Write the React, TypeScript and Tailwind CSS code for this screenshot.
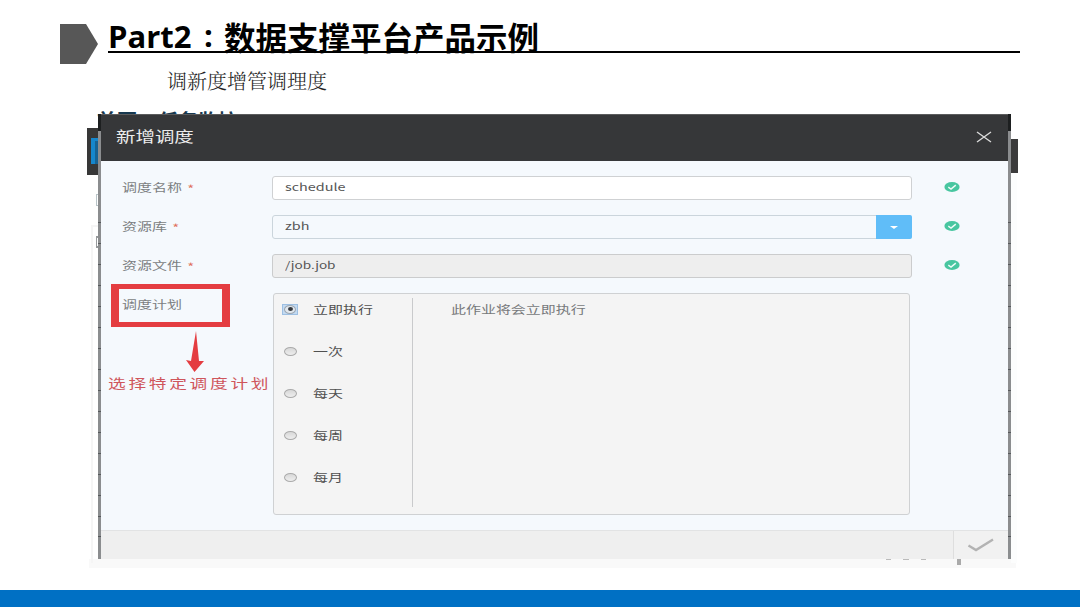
import { clsx } from 'clsx'

const plans = ['立即执行', '一次', '每天', '每周', '每月']

const ticks = [0, 21, 42, 63, 84, 105, 126, 147, 168, 189, 210, 231, 252, 273, 294, 314]

// Labels are set wider than they are tall
function Wide({ children, className = 'text-[11px]' }: { children: React.ReactNode; className?: string }) {
  return (
    <span className={clsx('block w-max origin-left scale-x-[1.36] whitespace-nowrap leading-none', className)}>
      {children}
    </span>
  )
}

function ValidIcon() {
  return (
    <svg className="-mt-[2px] ml-[31.5px] shrink-0" width="16" height="12" viewBox="0 0 16 12">
      <ellipse cx="8" cy="6" rx="7.6" ry="5" fill="#48c6a0" />
      <path d="M4.3 6.2 L7 8 L11.8 4.2" fill="none" stroke="#effbf7" strokeWidth="1.5" />
    </svg>
  )
}

function Field({ label, children }: { label: string; children: React.ReactNode }) {
  return (
    <div className="flex h-[24px] items-center">
      <div className="w-[150px] shrink-0 pb-px text-[#7c7f82]">
        <Wide>
          {label}
          <span className="relative top-px ml-[4px] text-[#e0705c]">*</span>
        </Wide>
      </div>
      {children}
      <ValidIcon />
    </div>
  )
}

function Radio({ checked }: { checked: boolean }) {
  if (checked) {
    return (
      <span className="flex h-[11px] w-[16px] items-center justify-center border border-[#9dbfe2] bg-[#c3daf1]">
        <span className="flex h-[9px] w-[12px] items-center justify-center rounded-[50%] border border-[#9ba6b1] bg-[#e2e8ee]">
          <span className="h-[4px] w-[5px] rounded-[50%] bg-[#34383c]" />
        </span>
      </span>
    )
  }
  return (
    <span className="flex w-[16px] justify-center">
      <span className="h-[9px] w-[13px] rounded-[50%] border border-[#aaa] bg-gradient-to-b from-[#d8d8d8] to-[#eee]" />
    </span>
  )
}

function SlideHeader() {
  return (
    <header className="flex h-[64px] pl-[60px]">
      <svg className="mt-[24px] shrink-0" width="38" height="40" viewBox="0 0 38 40">
        <path d="M0 0 H26 L38 20 L26 40 H0 Z" fill="#575757" />
      </svg>
      <h1 className="ml-[10px] flex h-[53px] w-[912px] items-end border-b-2 border-black font-bold leading-none text-black">
        <span className="w-[84px] pb-px font-['Open_Sans','Noto_Sans_CJK_SC',sans-serif] text-[31px] leading-[28px]">Part2</span>
        <span className="w-[32px] pb-px pl-[12px] font-['Open_Sans','Noto_Sans_CJK_SC',sans-serif] text-[31px] leading-[29px]">:</span>
        <span className="whitespace-nowrap text-[31.5px] leading-[29px]">数据支撑平台产品示例</span>
      </h1>
    </header>
  )
}

// Slivers of the window that stays visible behind the dialog
function Backdrop() {
  return (
    <div className="absolute inset-0">
      <div className="absolute left-[89px] top-[445px] h-[9px] w-[927px] bg-[#f9f9f9]" />
      <div className="absolute left-[91px] top-[111px] h-[338px] w-[7px] border-l-2 border-t-2 border-[#f5f5f5]" />
      <div className="absolute left-[1011px] top-[59px] h-[390px] w-[6px] bg-[#fcfdfd]" />
      <div className="absolute left-[96px] top-[80px] h-[12px] w-[2px] border-y border-l border-[#b9c4c8]" />
      <div className="absolute left-[96px] top-[122px] h-[12px] w-[2px] border-y-2 border-l border-[#96999b]" />
      <div className="absolute left-[87px] top-[14px] h-[47px] w-[12px] bg-[#373737]">
        <div className="ml-[4px] mt-[10px] h-[26px] w-[8px] border-l-4 border-t-3 border-[#1687cc] bg-[#176394]" />
      </div>
      <div className="absolute left-[1010px] top-[25px] h-[34px] w-[8px] bg-[#3b3b3b]" />
      <div className="absolute left-[97px] top-[-4px] flex gap-[21px] whitespace-nowrap text-[20px] font-bold leading-[22px] text-[#17384f]">
        <span>首页</span>
        <span>任务监控</span>
      </div>
      <div className="absolute left-[886px] top-[445px] flex gap-[12px]">
        <span className="h-px w-[5px] bg-[#bbb]" />
        <span className="h-px w-[6px] bg-[#bbb]" />
        <span className="h-px w-[5px] bg-[#bbb]" />
      </div>
      <div className="absolute left-[957px] top-[445px] h-[6px] w-[4px] bg-[#aaa]" />
    </div>
  )
}

function Edge() {
  return (
    <div className="relative h-full w-[3px] shrink-0">
      <div className="h-[17px] bg-[#1d1f20]" />
      <div className="h-[428px] bg-[#8b8d8f]" />
      {ticks.map((t) => (
        <span key={t} className="absolute left-0 h-px w-full bg-[#55585b]" style={{ top: t + 108 }} />
      ))}
    </div>
  )
}

function PlanPanel() {
  return (
    <div className="flex h-[222px] w-[637px] rounded-[3px] border border-[#cfd1d3] bg-[#f4f4f4]">
      <ul className="mb-[7px] mt-[4px] flex w-[139px] flex-col border-r border-[#c9cacc] pl-[8px]">
        {plans.map((plan, i) => (
          <li key={plan} className={clsx('flex shrink-0 items-start', i === plans.length - 1 ? 'h-[22px]' : 'h-[42px]')}>
            <div className="flex h-[22px] items-center gap-[15px]">
              <Radio checked={i === 0} />
              <Wide className="text-[11px] text-[#505050]">{plan}</Wide>
            </div>
          </li>
        ))}
      </ul>
      <p className="ml-[38px] mt-[4px] flex h-[22px] items-center text-[#77797b]">
        <Wide>此作业将会立即执行</Wide>
      </p>
    </div>
  )
}

function Dialog() {
  return (
    <div className="relative ml-[98px] flex h-[445px] w-[913px]">
      <Edge />
      <div className="flex w-[907px] flex-col">
        <div className="flex h-[47px] shrink-0 items-center justify-between border-t border-[#5b5c5d] bg-[#363739] pb-[3px] pl-[15px] pr-[16px]">
          <Wide className="text-[14.3px] text-[#ececec]">新增调度</Wide>
          <svg width="16" height="12" viewBox="0 0 16 12">
            <path d="M1 1 L15 11 M15 1 L1 11" stroke="#dadada" strokeWidth="1.4" />
          </svg>
        </div>

        <div className="flex h-[369px] flex-col bg-[#f5f9fd] pt-[15px]">
          <div className="flex flex-col gap-[15px] pl-[21px]">
            <Field label="调度名称">
              <div className="flex h-[24px] w-[640px] items-center rounded-[3px] border border-[#cfd1d3] bg-white pb-[2px] pl-[12px] text-[#555]">
                <Wide className="text-[10.6px]">schedule</Wide>
              </div>
            </Field>
            <Field label="资源库">
              <div className="flex h-[24px] w-[640px] items-center rounded-[3px] border border-[#cbd5dc] pl-[12px] text-[#555]">
                <Wide className="pb-[2px] text-[10.6px]">zbh</Wide>
                <div className="-mr-px ml-auto flex h-[24px] w-[36px] items-center justify-center rounded-r-[2px] bg-[#60bdf8]">
                  <span className="border-x-[4px] border-t-[3px] border-x-transparent border-t-white" />
                </div>
              </div>
            </Field>
            <Field label="资源文件">
              <div className="flex h-[24px] w-[640px] items-center rounded-[3px] border border-[#cbcccd] bg-[#eee] pb-[2px] pl-[12px] text-[#555]">
                <Wide className="text-[10px]">/job.job</Wide>
              </div>
            </Field>
          </div>

          <div className="mt-[6px] flex">
            <div className="w-[172px] shrink-0 pl-[7px]">
              <div className="ml-[3px] h-[43px] w-[119px] border-x-8 border-y-[5px] border-[#e43d41] pl-[3px] pt-[10px] text-[#7c7f82]">
                <Wide>调度计划</Wide>
              </div>
              <svg className="ml-[78px] mt-[4px]" width="18" height="41" viewBox="0 0 18 41">
                <path d="M10 0 L13 30 L18 30 L8.5 41 L0 29 L5 30 Z" fill="#e43d41" />
              </svg>
              <div className="mt-[4px] text-[#cf565c]">
                <Wide className="text-[13px] tracking-[2px]">选择特定调度计划</Wide>
              </div>
            </div>
            <div className="pt-[9px]">
              <PlanPanel />
            </div>
          </div>
        </div>

        <div className="flex h-[29px] justify-end border-t border-[#e2e3e4] bg-[#efefef]">
          <div className="flex w-[55px] items-center justify-center border-l border-[#dedede] bg-[#f1f1f1]">
            <svg width="28" height="14" viewBox="0 0 28 14">
              <path d="M1.5 7.5 L9 12 L26 1.5" fill="none" stroke="#b3b3b3" strokeWidth="2.4" />
            </svg>
          </div>
        </div>
      </div>
      <Edge />
    </div>
  )
}

export default function App() {
  return (
    <div className="flex h-[607px] w-[1080px] flex-col overflow-hidden bg-white font-['Noto_Sans_CJK_SC',sans-serif]">
      <SlideHeader />
      <p className="h-[50px] pl-[167px] pt-[7px] font-['Liberation_Serif','Noto_Serif_CJK_SC','Noto_Sans_CJK_SC',serif] text-[20px] font-light leading-[22px] text-[#222]">
        调新度增管调理度
      </p>
      <main className="relative h-[476px]">
        <Backdrop />
        <Dialog />
      </main>
      <footer className="h-[17px] bg-[#0070c4]" />
    </div>
  )
}
